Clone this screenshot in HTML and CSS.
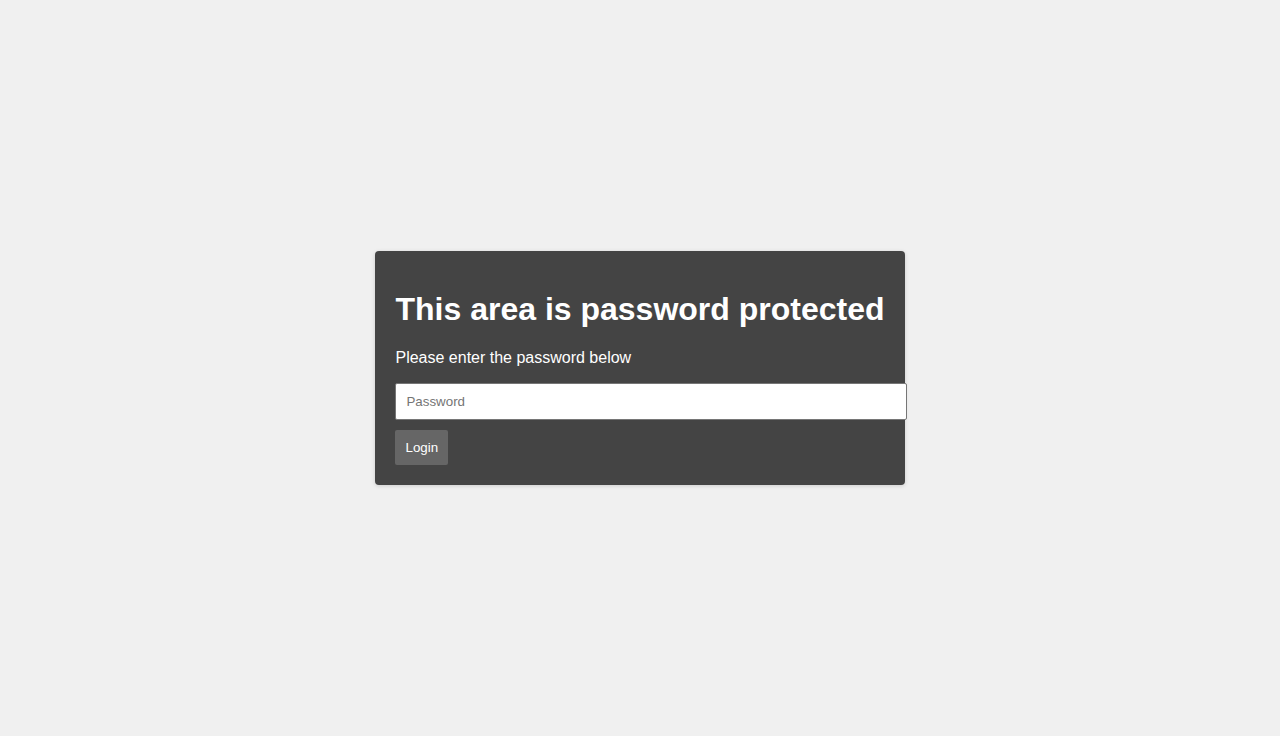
FILE: index.html
```html
<!DOCTYPE html>
<html lang="en">
<head>
<meta charset="utf-8">
<title>Password protected</title>
<link rel="stylesheet" href="styles.css">
</head>
<body>
<main class="page">
  <form class="card">
    <h1 class="title">This area is password protected</h1>
    <p class="hint">Please enter the password below</p>
    <input class="field" type="password" placeholder="Password">
    <button class="btn" type="button">Login</button>
  </form>
</main>
</body>
</html>
```

FILE: styles.css
```css
html, body {
  margin: 0;
  padding: 0;
}
body {
  background: #f0f0f0;
  font-family: "Liberation Sans", Arial, sans-serif;
}
.page {
  height: 100vh;
  display: flex;
  align-items: center;
  justify-content: center;
}
.card {
  background: #444444;
  color: #ffffff;
  padding: 20px;
  border-radius: 4px;
  box-shadow: 0 1px 4px rgba(0, 0, 0, 0.15);
  display: flex;
  flex-direction: column;
  align-items: flex-start;
}
.title {
  font-size: 32px;
  font-weight: bold;
  margin: 20px 0 21px;
  line-height: 37px;
}
.hint {
  font-size: 16px;
  margin: 0 0 16px;
  line-height: 18px;
}
.field {
  box-sizing: content-box;
  width: 100%;
  margin: 0 0 10px;
  padding: 10px;
  font-family: "Liberation Sans", Arial, sans-serif;
  font-size: 13.33px;
  line-height: 15px;
  height: 15px;
  border: 1px solid #767676;
  border-radius: 2px;
  background: #fff;
  color: #000;
}
.field::placeholder {
  color: #757575;
}
.btn {
  font-family: "Liberation Sans", Arial, sans-serif;
  font-size: 13.33px;
  line-height: 15px;
  padding: 10px;
  border: 0;
  border-radius: 2px;
  background: #666666;
  color: #ffffff;
}
```
